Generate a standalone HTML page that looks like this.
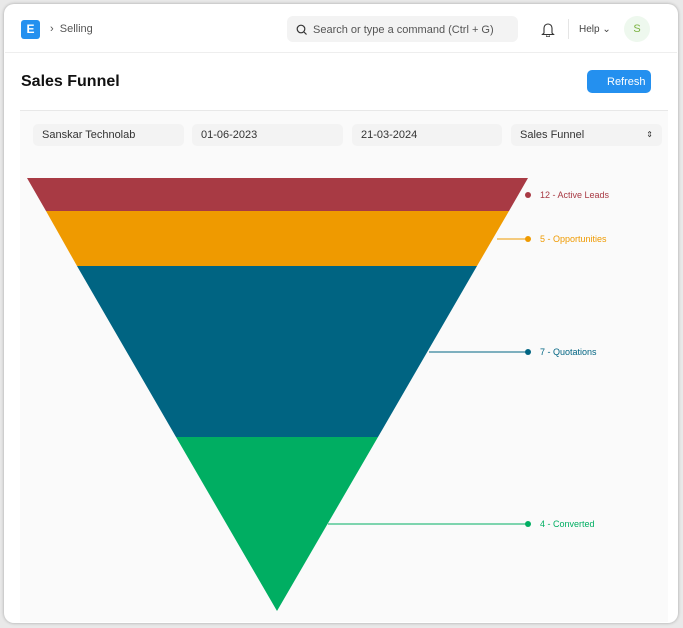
<!DOCTYPE html>
<html><head><style>
*{margin:0;padding:0;box-sizing:border-box}
body{width:683px;height:628px;background:#e9e9e9;font-family:"Liberation Sans",sans-serif;position:relative;overflow:hidden}
.frame{position:absolute;left:4px;top:4px;width:674px;height:619px;background:#fff;border-radius:10px;box-shadow:0 0 3px rgba(0,0,0,.3);overflow:hidden}
.abs{position:absolute}
.inp{position:absolute;top:124px;height:22px;background:#f3f3f3;border-radius:5px;font-size:11px;color:#333;padding:5px 9px}
</style></head><body>
<div class="frame"></div>
<div class="abs" style="left:21px;top:20px;width:19px;height:19px;background:#2490ef;border-radius:3px;color:#fff;font-size:12px;font-weight:bold;text-align:center;line-height:19px">E</div>
<div class="abs" style="left:50px;top:23px;font-size:11px;color:#555">›&nbsp;&nbsp;Selling</div>
<div class="abs" style="left:287px;top:16px;width:231px;height:26px;background:#f3f3f3;border-radius:6px;font-size:11px;color:#555;padding:8px 0 0 26px">Search or type a command (Ctrl + G)</div>
<svg class="abs" style="left:296px;top:24px" width="11" height="11"><circle cx="5" cy="5" r="3.8" fill="none" stroke="#333" stroke-width="1.2"/><line x1="8" y1="8" x2="10.5" y2="10.5" stroke="#333" stroke-width="1.2"/></svg>
<svg class="abs" style="left:541px;top:22px" width="14" height="15"><path d="M3 11V6a4 4 0 0 1 8 0v5l1.5 1.5h-11z M5.5 13.5a1.5 1.5 0 0 0 3 0" fill="none" stroke="#333" stroke-width="1.1"/></svg>
<div class="abs" style="left:568px;top:19px;width:1px;height:20px;background:#e5e5e5"></div>
<div class="abs" style="left:579px;top:24px;font-size:10px;color:#444">Help ⌄</div>
<div class="abs" style="left:624px;top:16px;width:26px;height:26px;border-radius:50%;background:#eef8ee;color:#7cb342;font-size:11px;text-align:center;line-height:26px">S</div>
<div class="abs" style="left:5px;top:52px;width:672px;height:1px;background:#eee"></div>
<div class="abs" style="left:21px;top:73px;font-size:16px;font-weight:bold;color:#111">Sales Funnel</div>
<div class="abs" style="left:587px;top:70px;width:64px;height:23px;background:#2490ef;border-radius:5px;color:#fff;font-size:11px;padding:6px 0 0 20px">Refresh</div>
<div class="abs" style="left:20px;top:110px;width:648px;height:512px;background:#fafafa;border-top:1px solid #e8e8e8"></div>
<div class="inp" style="left:33px;width:151px">Sanskar Technolab</div>
<div class="inp" style="left:192px;width:151px">01-06-2023</div>
<div class="inp" style="left:352px;width:150px">21-03-2024</div>
<div class="inp" style="left:511px;width:151px">Sales Funnel<span style="position:absolute;right:9px;font-size:8px;top:6px">⇕</span></div>
<svg class="abs" style="left:0;top:0" width="683" height="628">
<polygon points="27,178 528,178 509,211 46,211" fill="#a83a44"/>
<polygon points="46,211 509,211 477,266 77,266" fill="#ef9a00"/>
<polygon points="77,266 477,266 378,437 176,437" fill="#006482"/>
<polygon points="176,437 378,437 277,611" fill="#00ae62"/>
<line x1="497" y1="239" x2="528" y2="239" stroke="#ef9a00"/>
<line x1="429" y1="352" x2="528" y2="352" stroke="#006482"/>
<line x1="328" y1="524" x2="528" y2="524" stroke="#00ae62"/>
<circle cx="528" cy="195" r="3" fill="#a83a44"/>
<circle cx="528" cy="239" r="3" fill="#ef9a00"/>
<circle cx="528" cy="352" r="3" fill="#006482"/>
<circle cx="528" cy="524" r="3" fill="#00ae62"/>
<g font-family="Liberation Sans" font-size="9">
<text x="540" y="198" fill="#a83a44">12 - Active Leads</text>
<text x="540" y="242" fill="#ef9a00">5 - Opportunities</text>
<text x="540" y="355" fill="#006482">7 - Quotations</text>
<text x="540" y="527" fill="#00ae62">4 - Converted</text>
</g>
</svg>
</body></html>
